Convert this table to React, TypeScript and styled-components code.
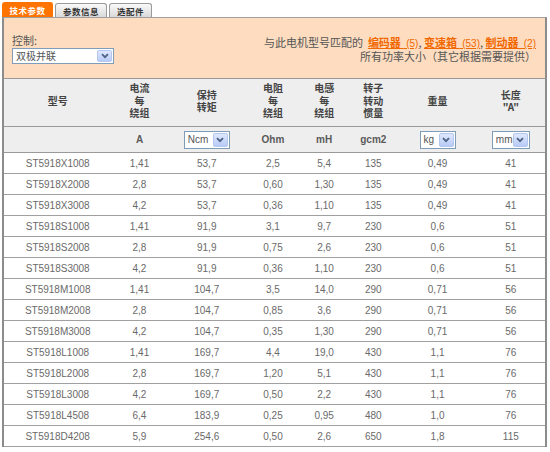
import React from "react";
import styled, { createGlobalStyle } from "styled-components";

const Global = createGlobalStyle`
  html, body { margin: 0; padding: 0; background: #fff; }
  body { font-family: "Liberation Sans", Arial, sans-serif; }
`;

const Page = styled.div`
  width: 545px;
  padding: 2px 0 0 2px;
`;

const Tabs = styled.div`
  display: flex;
  gap: 2px;
  height: 15px;
  align-items: flex-end;
`;

const Tab = styled.div<{ $active?: boolean; $w: number }>`
  width: ${(p) => p.$w}px;
  height: ${(p) => (p.$active ? 15 : 14)}px;
  box-sizing: border-box;
  display: flex;
  align-items: center;
  justify-content: center;
  font-family: "Noto Sans CJK SC", sans-serif;
  font-weight: 700;
  font-size: 8.5px;
  letter-spacing: 0.5px;
  border-radius: 3px 3px 0 0;
  color: ${(p) => (p.$active ? "#fff" : "#333")};
  background: ${(p) => (p.$active ? "#ff7300" : "linear-gradient(#fafafa, #d9d9d9)")};
  border: 1px solid ${(p) => (p.$active ? "#ff7300" : "#9a9a9a")};
  border-bottom: none;
`;

const Panel = styled.div`
  height: 62px;
  box-sizing: border-box;
  background: #fddcbf;
  border-top: 1px solid #a0a0a0;
  border-left: 2px solid #8c8c8c;
  border-right: 2px solid #8c8c8c;
  border-bottom: 1px solid #9a9a9a;
  display: flex;
  justify-content: space-between;
  padding: 16px 9px 0 8px;
  color: #555;
  font-family: "Noto Sans CJK SC", sans-serif;
  font-size: 11px;
`;

const Control = styled.div`
  display: flex;
  flex-direction: column;
  gap: 1px;
  line-height: 13px;
`;

const Match = styled.div`
  text-align: right;
  line-height: 13px;
  padding-top: 2px;
`;

const Link = styled.a`
  color: #f26800;
  font-weight: 700;
  text-decoration: underline;
  white-space: pre;
`;

const Count = styled.span`
  font-family: "Liberation Sans", Arial, sans-serif;
  font-weight: 400;
  font-size: 10px;
`;

const SelectBox = styled.div<{ $w: number; $h: number }>`
  width: ${(p) => p.$w}px;
  height: ${(p) => p.$h}px;
  box-sizing: border-box;
  border: 1px solid #7f9db9;
  background: #fff;
  display: inline-flex;
  align-items: center;
  justify-content: space-between;
  padding: 0 1px 0 3px;
  font-family: "Liberation Sans", "Noto Sans CJK SC", sans-serif;
  font-size: 10px;
  font-weight: 400;
  color: #555;
  vertical-align: middle;
`;

const SelectBtn = styled.span`
  width: 15px;
  height: calc(100% - 2px);
  box-sizing: border-box;
  border: 1px solid #b5c7f0;
  border-radius: 2px;
  background: linear-gradient(#dfe8fd, #b8cbf7);
  display: flex;
  align-items: center;
  justify-content: center;
`;

const Select = ({ value, w, h = 18 }: { value: string; w: number; h?: number }) => (
  <SelectBox $w={w} $h={h}>
    <span>{value}</span>
    <SelectBtn>
      <svg width="8" height="6" viewBox="0 0 8 6">
        <path d="M1 1.2 L4 4.2 L7 1.2" fill="none" stroke="#4d6185" strokeWidth="1.8" />
      </svg>
    </SelectBtn>
  </SelectBox>
);

const Table = styled.table`
  width: 545px;
  border-collapse: collapse;
  table-layout: fixed;
  border-left: 2px solid #8c8c8c;
  border-right: 2px solid #8c8c8c;
`;

const Th = styled.th`
  height: 44px;
  background: #eeeeee;
  font-family: "Noto Sans CJK SC", sans-serif;
  font-weight: 700;
  font-size: 10px;
  line-height: 12.5px;
  color: #444;
  text-align: center;
  vertical-align: middle;
  padding: 0 0 3px;
  border-bottom: 1px solid #9a9a9a;
`;

const HeadLine = styled.div`
  height: 12.5px;
  overflow: visible;
`;

const UnitCell = styled.td`
  height: 26px;
  box-sizing: border-box;
  background: #eeeeee;
  font-weight: 700;
  font-size: 10px;
  color: #5a5a5a;
  text-align: center;
  vertical-align: middle;
  padding: 0;
  border-bottom: 1px solid #9a9a9a;
`;

const Td = styled.td`
  height: 21px;
  box-sizing: border-box;
  font-size: 10px;
  color: #6a6a6a;
  text-align: center;
  vertical-align: middle;
  padding: 0;
  border-bottom: 1px solid #a0a0a0;
`;

const widths = [108, 56, 78, 54, 48, 50, 78, 69];

const headers: string[][] = [
  ["型号"],
  ["电流", "每", "绕组"],
  ["保持", "转矩"],
  ["电阻", "每", "绕组"],
  ["电感", "每", "绕组"],
  ["转子", "转动", "惯量"],
  ["重量"],
  ["长度", "\"A\""],
];

const rows: string[][] = [
  ["ST5918X1008", "1,41", "53,7", "2,5", "5,4", "135", "0,49", "41"],
  ["ST5918X2008", "2,8", "53,7", "0,60", "1,30", "135", "0,49", "41"],
  ["ST5918X3008", "4,2", "53,7", "0,36", "1,10", "135", "0,49", "41"],
  ["ST5918S1008", "1,41", "91,9", "3,1", "9,7", "230", "0,6", "51"],
  ["ST5918S2008", "2,8", "91,9", "0,75", "2,6", "230", "0,6", "51"],
  ["ST5918S3008", "4,2", "91,9", "0,36", "1,10", "230", "0,6", "51"],
  ["ST5918M1008", "1,41", "104,7", "3,5", "14,0", "290", "0,71", "56"],
  ["ST5918M2008", "2,8", "104,7", "0,85", "3,6", "290", "0,71", "56"],
  ["ST5918M3008", "4,2", "104,7", "0,35", "1,30", "290", "0,71", "56"],
  ["ST5918L1008", "1,41", "169,7", "4,4", "19,0", "430", "1,1", "76"],
  ["ST5918L2008", "2,8", "169,7", "1,20", "5,1", "430", "1,1", "76"],
  ["ST5918L3008", "4,2", "169,7", "0,50", "2,2", "430", "1,1", "76"],
  ["ST5918L4508", "6,4", "183,9", "0,25", "0,95", "480", "1,0", "76"],
  ["ST5918D4208", "5,9", "254,6", "0,50", "2,6", "650", "1,8", "115"],
];

export default function App() {
  return (
    <>
      <Global />
      <Page>
        <Tabs>
          <Tab $active $w={51}>技术参数</Tab>
          <Tab $w={52}>参数信息</Tab>
          <Tab $w={43}>选配件</Tab>
        </Tabs>
        <Panel>
          <Control>
            <span>控制:</span>
            <Select value="双极并联" w={102} h={16} />
          </Control>
          <Match>
            <div>
              与此电机型号匹配的&nbsp;&nbsp;
              <Link>编码器 <Count> (5)</Count></Link>,&nbsp;
              <Link>变速箱 <Count> (53)</Count></Link>,&nbsp;
              <Link>制动器 <Count> (2)</Count></Link>
            </div>
            <div>所有功率大小（其它根据需要提供）</div>
          </Match>
        </Panel>
        <Table>
          <colgroup>
            {widths.map((w, i) => (
              <col key={i} style={{ width: w }} />
            ))}
          </colgroup>
          <thead>
            <tr>
              {headers.map((h, i) => (
                <Th key={i}>
                  {h.map((line, j) => (
                    <HeadLine key={j}>{line}</HeadLine>
                  ))}
                </Th>
              ))}
            </tr>
            <tr>
              <UnitCell />
              <UnitCell>A</UnitCell>
              <UnitCell>
                <Select value="Ncm" w={46} />
              </UnitCell>
              <UnitCell>Ohm</UnitCell>
              <UnitCell>mH</UnitCell>
              <UnitCell>gcm2</UnitCell>
              <UnitCell>
                <Select value="kg" w={36} />
              </UnitCell>
              <UnitCell>
                <Select value="mm" w={38} />
              </UnitCell>
            </tr>
          </thead>
          <tbody>
            {rows.map((r, i) => (
              <tr key={i}>
                {r.map((c, j) => (
                  <Td key={j}>{c}</Td>
                ))}
              </tr>
            ))}
          </tbody>
        </Table>
      </Page>
    </>
  );
}
